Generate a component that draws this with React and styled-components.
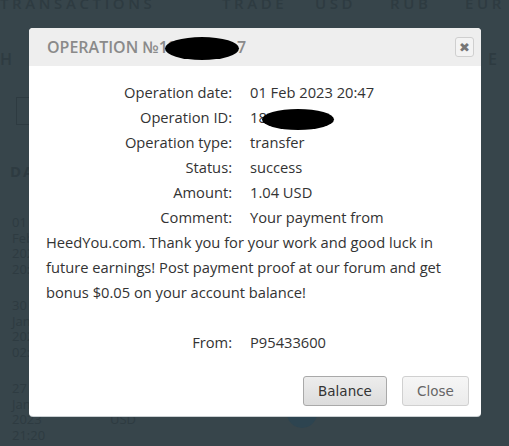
import React from 'react';
import styled, { createGlobalStyle } from 'styled-components';

const Global = createGlobalStyle`
  html, body {
    margin: 0;
    padding: 0;
    background: #37454b;
    overflow: hidden;
  }
  body {
    font-family: 'Open Sans', 'DejaVu Sans', sans-serif;
  }
`;

const Screen = styled.div`
  position: relative;
  width: 509px;
  height: 446px;
  overflow: hidden;
  background: #37454b;
`;

/* faded page behind the overlay */
const Page = styled.div`
  color: #2e3b41;
  font-family: 'Open Sans', sans-serif;
`;

const TopBar = styled.div`
  display: grid;
  grid-template-columns: 222px 93px 75px 75px 44px;
  height: 18px;
  margin-top: -7px;
  font-size: 15px;
  font-weight: 600;
  letter-spacing: 3.6px;
  white-space: nowrap;
`;

const SubBar = styled.div`
  display: flex;
  justify-content: space-between;
  height: 22px;
  margin-top: 37px;
  padding-right: 12px;
  font-size: 16px;
  font-weight: 600;
`;

const GridIcon = styled.div`
  width: 13px;
  height: 26px;
  margin: 27px 0 0 16px;
  border: 1px solid #2e3b41;
`;

const DateHead = styled.div`
  margin: 36px 0 0 10px;
  height: 20px;
  font-size: 15px;
  font-weight: 700;
  letter-spacing: 2px;
`;

const DateRow = styled.div`
  display: flex;
  align-items: flex-start;
  margin: ${p => p.$top}px 0 0 12px;
  font-size: 13px;
  line-height: 15.5px;
`;

const DateCell = styled.div`
  width: 32px;
`;

const Currency = styled.div`
  margin: 31px 0 0 66px;
`;

const Dot = styled.div`
  width: 30px;
  height: 30px;
  margin: 17px 0 0 151px;
  border-radius: 50%;
  background: #2d4450;
`;

const Modal = styled.div`
  position: absolute;
  left: 29px;
  top: 28px;
  width: 452px;
  height: 388px;
  display: flex;
  flex-direction: column;
  background: #fff;
  border-radius: 4px;
  overflow: hidden;
  box-shadow: 0 1px 0 #c9cfd2;
`;

const Header = styled.div`
  display: flex;
  align-items: center;
  justify-content: space-between;
  height: 38px;
  padding: 0 7px 0 18px;
  background: #eeeeee;
`;

const Title = styled.div`
  font-family: 'Open Sans', sans-serif;
  font-size: 16px;
  font-weight: 600;
  letter-spacing: 0;
  color: #8a8a8a;
  white-space: nowrap;
`;

const Blot = styled.span`
  display: inline-block;
  vertical-align: middle;
  width: ${p => p.$w}px;
  height: ${p => p.$h}px;
  margin: -6px ${p => p.$mr}px -6px ${p => p.$ml}px;
  border-radius: 50%;
  background: #000;
`;

const XButton = styled.button`
  display: flex;
  align-items: center;
  justify-content: center;
  width: 19px;
  height: 20px;
  padding: 0;
  border: 1px solid #cfcfcf;
  border-radius: 3px;
  background: #f3f3f3;
  color: #767676;
  font-size: 13px;
  line-height: 1;
  font-family: 'DejaVu Sans', sans-serif;
`;

const Body = styled.div`
  flex: 1;
  padding: 14px 21px 0 17px;
  font-size: 14.7px;
  line-height: 25px;
  color: #333;
`;

const Row = styled.div`
  margin-bottom: ${p => (p.$gap ? 25 : 0)}px;
`;

const Label = styled.span`
  display: inline-block;
  width: 186px;
  margin-right: 18px;
  text-align: right;
`;

const Footer = styled.div`
  display: flex;
  justify-content: flex-end;
  gap: 15px;
  padding: 0 12px 10px 0;
`;

const Button = styled.button`
  width: ${p => (p.$primary ? 84 : 67)}px;
  height: 30px;
  padding: 0;
  font-family: 'DejaVu Sans', sans-serif;
  font-size: 13.5px;
  color: ${p => (p.$primary ? '#333' : '#666')};
  border: 1px solid ${p => (p.$primary ? '#a9a9a9' : '#d0d0d0')};
  border-radius: 3px;
  background: ${p =>
    p.$primary
      ? 'linear-gradient(#ededed, #dcdcdc)'
      : 'linear-gradient(#f6f6f6, #ebebeb)'};
`;

const details = [
  ['Operation type:', 'transfer'],
  ['Status:', 'success'],
  ['Amount:', '1.04 USD'],
];

export default function App() {
  return (
    <Screen>
      <Global />
      <Page>
        <TopBar>
          <span>TRANSACTIONS</span>
          <span>TRADE</span>
          <span>USD</span>
          <span>RUB</span>
          <span>EUR</span>
        </TopBar>
        <SubBar>
          <span>H</span>
          <span>E</span>
        </SubBar>
        <GridIcon />
        <DateHead>DA</DateHead>
        <DateRow $top={34}>
          <DateCell>01 Feb 2023 20:47</DateCell>
        </DateRow>
        <DateRow $top={21}>
          <DateCell>30 Jan 2023 02:15</DateCell>
        </DateRow>
        <DateRow $top={21}>
          <DateCell>27 Jan 2023 21:20</DateCell>
          <Currency>USD</Currency>
          <Dot />
        </DateRow>
      </Page>

      <Modal>
        <Header>
          <Title>
            OPERATION №18
            <Blot $w={74} $h={23} $ml={-12} $mr={-2} />7
          </Title>
          <XButton aria-label="close">✖</XButton>
        </Header>
        <Body>
          <Row>
            <Label>Operation date:</Label>
            01 Feb 2023 20:47
          </Row>
          <Row>
            <Label>Operation ID:</Label>
            18
            <Blot $w={72} $h={21} $ml={-5} $mr={0} />
          </Row>
          {details.map(([k, v]) => (
            <Row key={k}>
              <Label>{k}</Label>
              {v}
            </Row>
          ))}
          <Row $gap>
            <Label>Comment:</Label>
            Your payment from HeedYou.com. Thank you for your work and good luck in future
            earnings! Post payment proof at our forum and get bonus $0.05 on your account
            balance!
          </Row>
          <Row>
            <Label>From:</Label>
            P95433600
          </Row>
        </Body>
        <Footer>
          <Button $primary>Balance</Button>
          <Button>Close</Button>
        </Footer>
      </Modal>
    </Screen>
  );
}
